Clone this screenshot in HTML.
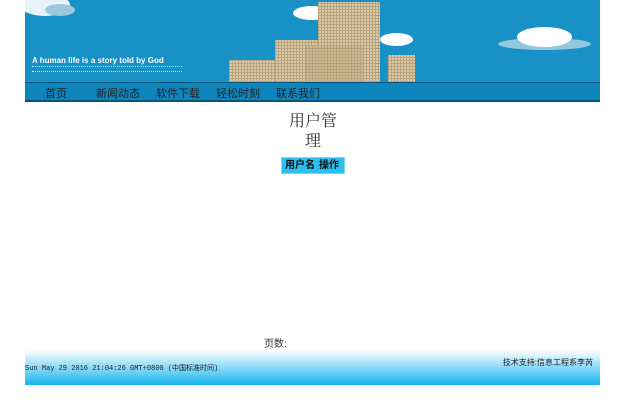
<!DOCTYPE html>
<html><head><meta charset="utf-8"><style>
body{margin:0;background:#fff;width:640px;height:405px;position:relative;overflow:hidden;font-family:"Liberation Sans","Noto Sans CJK SC",sans-serif}
.ban{position:absolute;left:25px;top:0;width:575px;height:82px;background:#1891c6;overflow:hidden}
.nav{position:absolute;left:25px;top:82px;width:575px;height:17px;background:#0e86bd;border-top:1px solid #07557a;border-bottom:2px solid #07557a}
.nav span{position:absolute;top:2px;font-size:11px;color:#222}
.c{position:absolute;background:#fff;border-radius:50%}
.b{position:absolute;background:#d9c9a8;background-image:repeating-linear-gradient(90deg,#b9a47e 0 1px,transparent 1px 3px),repeating-linear-gradient(0deg,#b9a47e 0 1px,transparent 1px 3px)}
.foot{position:absolute;left:25px;top:350px;width:575px;height:35px;background:linear-gradient(#fff,#15b5f0)}
</style></head><body>
<div class="ban">
<div class="c" style="left:-5px;top:-6px;width:50px;height:22px;opacity:.9"></div>
<div class="c" style="left:20px;top:4px;width:30px;height:12px;background:#9cc8dc"></div>
<div class="c" style="left:268px;top:6px;width:38px;height:14px"></div>
<div class="c" style="left:355px;top:33px;width:33px;height:13px"></div>
<div class="c" style="left:473px;top:38px;width:93px;height:12px;background:#93c7dd"></div>
<div class="c" style="left:492px;top:27px;width:55px;height:20px"></div>
<div class="b" style="left:204px;top:60px;width:46px;height:22px"></div>
<div class="b" style="left:250px;top:40px;width:45px;height:42px"></div>
<div class="b" style="left:293px;top:2px;width:62px;height:80px"></div>
<div class="b" style="left:281px;top:45px;width:58px;height:37px;background-color:#cdb892"></div>
<div class="b" style="left:363px;top:55px;width:27px;height:27px"></div>
<div style="position:absolute;left:7px;top:56px;color:#fff;font-size:8px;font-weight:bold">A human life is a story told by God</div>
<div style="position:absolute;left:7px;top:66px;width:150px;height:4px;border-top:1px dotted #cde;border-bottom:1px dotted #cde"></div>
</div>
<div class="nav"><span style="left:20px">首页</span><span style="left:71px">新闻动态</span><span style="left:131px">软件下载</span><span style="left:191px">轻松时刻</span><span style="left:251px">联系我们</span></div>
<div style="position:absolute;left:285px;top:110px;width:56px;text-align:center;font-size:16px;line-height:20px;color:#333;font-family:'Noto Serif CJK SC',serif">用户管理</div>
<div style="position:absolute;left:281px;top:157px;width:62px;height:15px;background:#2bc0ef;border:1px solid #7dd;font-size:10px;font-weight:bold;line-height:15px;color:#111"><span style="margin-left:3px">用户名</span><span style="margin-left:4px">操作</span></div>
<div style="position:absolute;left:264px;top:335px;font-size:10px;color:#333">页数:</div>
<div class="foot"><span style="position:absolute;right:7px;top:7px;font-size:8px;color:#222">技术支持:信息工程系李芮</span><span style="position:absolute;left:0;top:13px;font-size:7px;font-family:'Liberation Mono','Noto Sans CJK SC',monospace;color:#222">Sun May 29 2016 21:04:26 GMT+0800 (中国标准时间)</span></div>
</body></html>
